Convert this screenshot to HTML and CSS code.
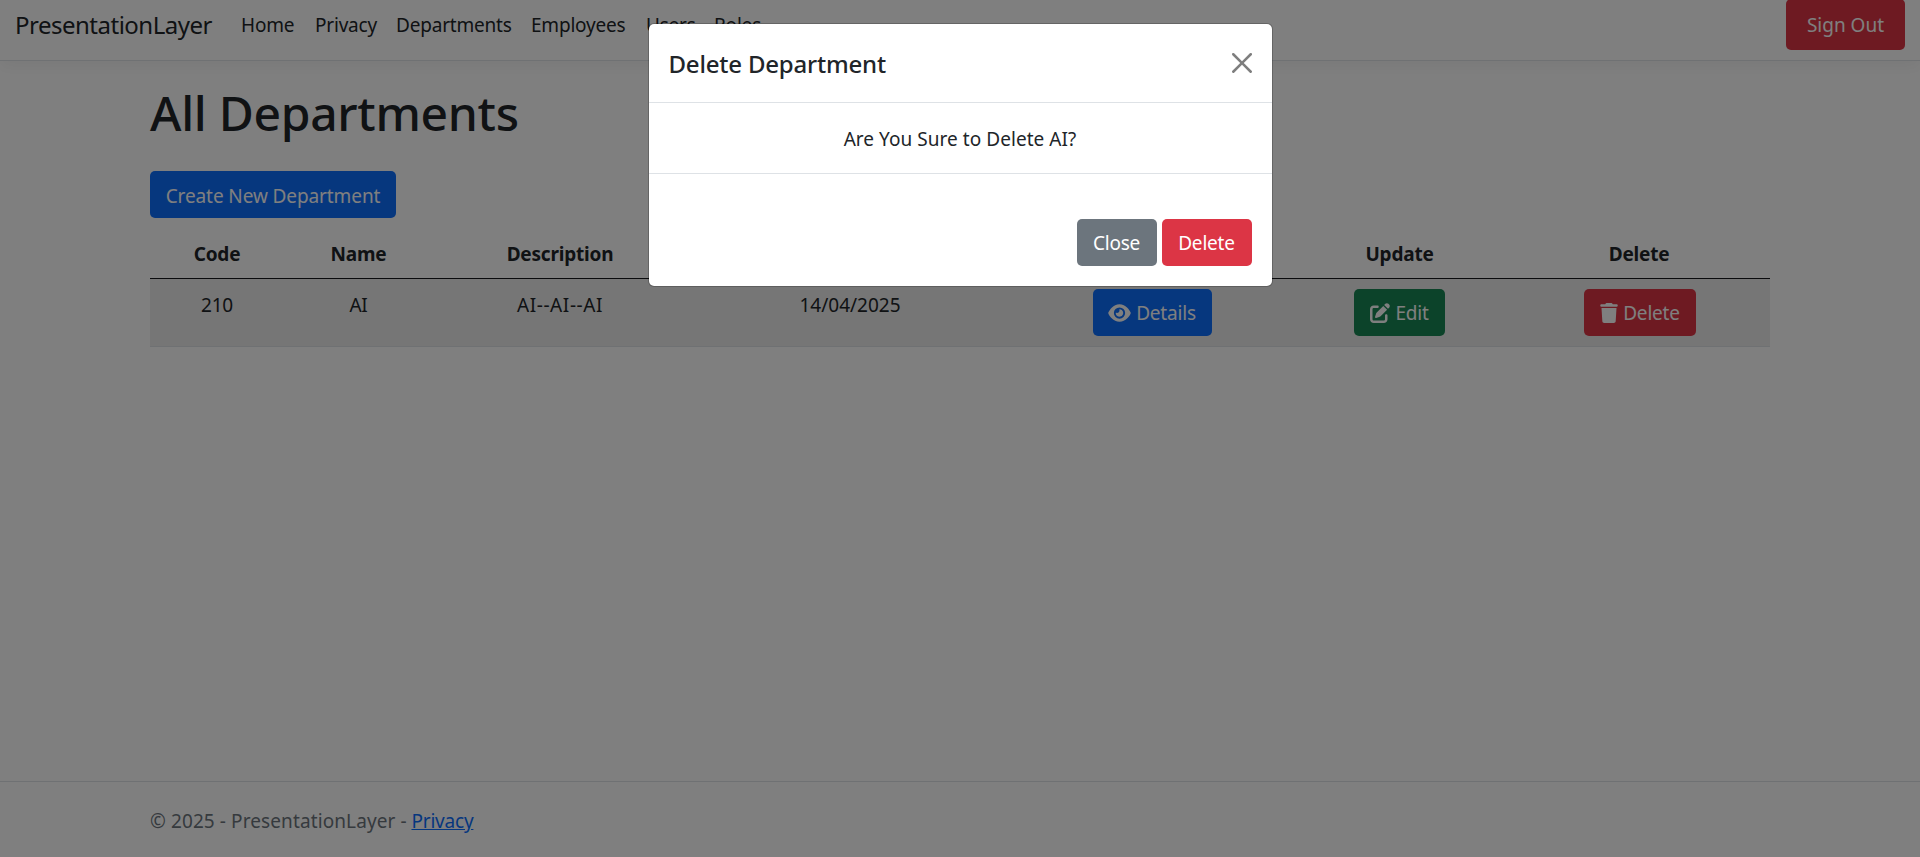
FILE: index.html
```html
<!DOCTYPE html>
<html lang="en">
<head>
<meta charset="utf-8">
<title>All Departments - PresentationLayer</title>
<link rel="stylesheet" href="styles.css">
</head>
<body>
<div class="page">
  <header class="navbar">
    <a class="brand">PresentationLayer</a>
    <nav class="nav">
      <a class="nav-link home">Home</a>
      <a class="nav-link privacy">Privacy</a>
      <a class="nav-link departments">Departments</a>
      <a class="nav-link employees">Employees</a>
      <a class="nav-link users">Users</a>
      <a class="nav-link roles">Roles</a>
    </nav>
    <a class="btn danger sign-out"><span>Sign Out</span></a>
  </header>
  <main class="container">
    <h1 class="title"><span>All Departments</span></h1>
    <a class="btn primary create"><span>Create New Department</span></a>
    <table class="table">
      <colgroup><col class="c-code"><col class="c-name"><col class="c-desc"><col class="c-date"><col class="c-details"><col class="c-update"><col class="c-delete"></colgroup>
      <thead>
        <tr><th>Code</th><th>Name</th><th>Description</th><th></th><th></th><th>Update</th><th>Delete</th></tr>
      </thead>
      <tbody>
        <tr>
          <td>210</td><td>AI</td><td class="desc">AI--AI--AI</td><td class="date">14/04/2025</td>
          <td><a class="btn primary details"><svg class="icon eye" viewBox="0 0 576 512"><path d="M288 32c-80.800 0-145.500 36.800-192.600 80.600C48.600 156 17.300 208 2.500 243.700c-3.300 7.900-3.300 16.700 0 24.600C17.300 304 48.600 356 95.400 399.400C142.500 443.200 207.200 480 288 480s145.500-36.800 192.600-80.600c46.800-43.500 78.100-95.400 93-131.100c3.300-7.900 3.300-16.700 0-24.600c-14.900-35.700-46.200-87.700-93-131.100C433.500 68.800 368.800 32 288 32zM144 256a144 144 0 1 1 288 0a144 144 0 1 1-288 0zm144-64c0 35.300-28.700 64-64 64c-7.100 0-13.900-1.200-20.300-3.300c-5.500-1.800-11.900 1.600-11.700 7.400c.3 6.900 1.300 13.800 3.200 20.700c13.700 51.200 66.400 81.600 117.600 67.900s81.600-66.400 67.900-117.600c-11.100-41.500-47.800-69.400-88.600-71.100c-5.800-.2-9.200 6.100-7.400 11.700c2.100 6.400 3.300 13.200 3.300 20.300z"/></svg><span>Details</span></a></td>
          <td><a class="btn success edit"><svg class="icon pen" viewBox="0 0 512 512"><path d="M471.600 21.700c-21.900-21.900-57.300-21.900-79.200 0L362.300 51.700l97.900 97.900 30.100-30.100c21.900-21.900 21.900-57.300 0-79.200L471.600 21.700zm-299.200 220c-6.100 6.100-10.800 13.600-13.500 21.900l-29.600 88.800c-2.900 8.600-.6 18.100 5.800 24.600s15.900 8.700 24.600 5.800l88.800-29.600c8.200-2.700 15.700-7.400 21.900-13.500L437.700 172.300 339.700 74.300 172.400 241.700zM96 64C43 64 0 107 0 160V416c0 53 43 96 96 96H352c53 0 96-43 96-96V320c0-17.700-14.300-32-32-32s-32 14.300-32 32v96c0 17.700-14.300 32-32 32H96c-17.700 0-32-14.300-32-32V160c0-17.700 14.300-32 32-32h96c17.700 0 32-14.300 32-32s-14.300-32-32-32H96z"/></svg><span>Edit</span></a></td>
          <td><a class="btn danger delete"><svg class="icon trash" viewBox="0 0 448 512"><path d="M135.200 17.700L128 32H32C14.300 32 0 46.300 0 64S14.300 96 32 96H416c17.700 0 32-14.300 32-32s-14.300-32-32-32H320l-7.200-14.300C307.400 6.800 296.300 0 284.200 0H163.800c-12.100 0-23.200 6.800-28.600 17.700zM416 128H32L53.200 467c1.600 25.300 22.600 45 47.900 45H346.900c25.300 0 46.300-19.700 47.900-45L416 128z"/></svg><span>Delete</span></a></td>
        </tr>
      </tbody>
    </table>
  </main>
  <footer class="footer">
    <p class="footer-text"><span class="copy">© 2025 - PresentationLayer -</span> <a class="footer-link">Privacy</a></p>
  </footer>
</div>
<div class="overlay">
  <section class="modal" role="dialog">
    <div class="modal-header">
      <h5 class="modal-title">Delete Department</h5>
      <svg class="close-icon" viewBox="0 0 16 16"><path d="M.293.293a1 1 0 0 1 1.414 0L8 6.586 14.293.293a1 1 0 1 1 1.414 1.414L9.414 8l6.293 6.293a1 1 0 0 1-1.414 1.414L8 9.414l-6.293 6.293a1 1 0 0 1-1.414-1.414L6.586 8 .293 1.707a1 1 0 0 1 0-1.414z"/></svg>
    </div>
    <div class="modal-body"><span>Are You Sure to Delete AI?</span></div>
    <div class="modal-footer">
      <a class="btn secondary close"><span>Close</span></a>
      <a class="btn danger confirm"><span>Delete</span></a>
    </div>
  </section>
</div>
</body>
</html>
```
FILE: styles.css
```css
* { box-sizing: border-box; }
html, body { height: 100%; }
body {
  margin: 0;
  overflow: hidden;
  background: #fff;
  color: #212529;
  font-family: "Segoe UI", "Noto Sans", "Open Sans", sans-serif;
  font-size: 19px;
  line-height: 30px;
  letter-spacing: -0.2px;
}
.page { display: flex; flex-direction: column; height: 857px; }

.navbar {
  display: flex;
  align-items: flex-start;
  height: 61px;
  padding: 0 15px;
  border-bottom: 1px solid #dee2e6;
  box-shadow: 0 5px 15px rgba(0, 0, 0, .05);
}
.brand { width: 216px; margin-top: 10px; font-size: 24px; letter-spacing: -0.5px; white-space: nowrap; }
.nav { display: flex; flex: 1; margin-top: 10px; }
.nav-link { padding-left: 10px; white-space: nowrap; }
.home { width: 74px; }
.privacy { width: 81px; }
.departments { width: 135px; }
.employees { width: 115px; }
.users { width: 68px; }

.btn {
  display: inline-flex;
  align-items: center;
  justify-content: center;
  height: 47px;
  border-radius: 5px;
  color: #fff;
  white-space: nowrap;
}
.primary { background: #0d6efd; }
.success { background: #198754; }
.danger { background: #dc3545; }
.secondary { background: #6c757d; }
.sign-out { width: 119px; height: 51px; margin-top: -1px; letter-spacing: 0; }

.container { flex: 1; width: 1620px; margin: 0 auto; }
.title { margin: 22px 0 28px; font-size: 48px; font-weight: 500; line-height: 60px; letter-spacing: -0.3px; }
.create { display: flex; width: 246px; padding-top: 2px; letter-spacing: -0.1px; }

.table { width: 1620px; margin-top: 11px; border-collapse: separate; border-spacing: 0; table-layout: fixed; text-align: center; }
.c-code { width: 134px; }
.c-name { width: 149px; }
.c-desc { width: 254px; }
.c-date { width: 326px; }
.c-details { width: 278px; }
.c-update { width: 217px; }
.c-delete { width: 262px; }
.table th { height: 50px; padding: 0; border-bottom: 1px solid #14171a; font-weight: 700; }
.table td { height: 68px; padding: 11px 0 0; border-bottom: 1px solid #dee2e6; background: #ececec; vertical-align: top; }
.table .btn { position: relative; top: -1px; padding-top: 1px; }
.desc { letter-spacing: 0.6px; }
.date { letter-spacing: 0; }
.details { width: 119px; }
.edit { width: 91px; }
.delete { width: 112px; left: 1px; }
.icon { height: 20px; margin-right: 5px; fill: #fff; }
.eye { width: 23px; }
.pen { width: 20px; }
.trash { width: 18px; }

.footer { height: 76px; padding: 24px 150px 0; border-top: 1px solid #dee2e6; color: #6c757d; }
.footer-text { margin: 0; }
.copy { letter-spacing: 0.1px; }
.footer-link { color: #0d6efd; text-decoration: underline; }

.overlay { position: absolute; inset: 0; background: rgba(0, 0, 0, .5); }
.modal {
  width: 625px;
  height: 264px;
  margin: 23px auto 0;
  border: 1px solid rgba(0, 0, 0, .2);
  border-radius: 6px;
  background: #fff;
  background-clip: padding-box;
}
.modal-header { display: flex; align-items: center; justify-content: space-between; height: 79px; padding: 0 20px; border-bottom: 1px solid #dee2e6; }
.modal-title { margin: 0; padding-top: 1px; font-size: 24px; font-weight: 500; }
.close-icon { width: 20px; height: 20px; opacity: .5; }
.modal-body { height: 70px; padding-top: 21px; letter-spacing: 0.05px; text-align: center; }
.modal-footer { display: flex; justify-content: flex-end; gap: 5px; padding: 45px 20px 0; border-top: 1px solid #dee2e6; }
.close { width: 80px; }
.confirm { width: 90px; }
```
